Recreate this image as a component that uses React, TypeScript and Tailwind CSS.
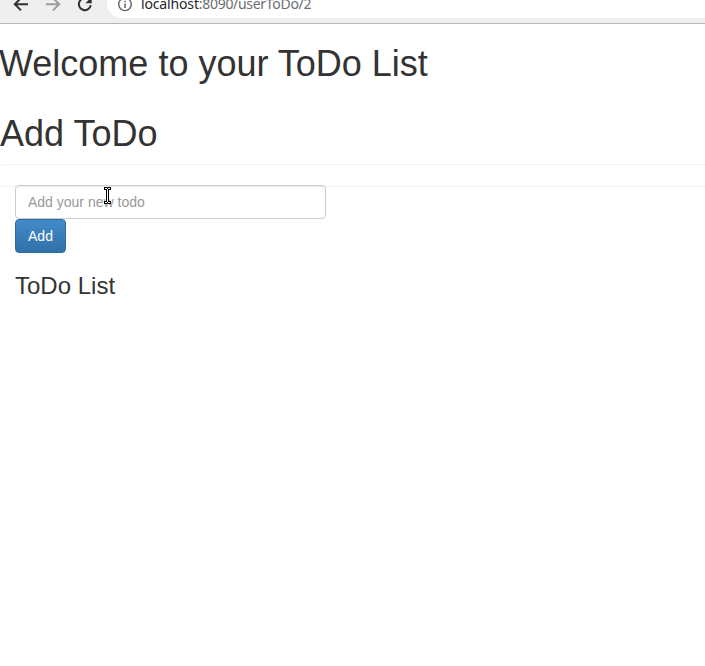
function BrowserBar() {
  return (
    <header className="h-6 shrink-0 overflow-hidden border-b border-[#b8b8b8] bg-[#efefef]">
      <div className="flex h-[18px] items-start">
        <svg className="h-[18px] w-[107px] shrink-0" viewBox="0 0 107 18" fill="none">
          <path d="M28 4.2H15M21 -2L14.8 4.2L21 10.4" stroke="#303134" strokeWidth="2" />
          <path d="M46 4.2H59M53 -2L59.2 4.2L53 10.4" stroke="#9b9c9e" strokeWidth="2" />
          <path d="M90.8 5.2A6 6 0 1 1 89 -0.2" stroke="#303134" strokeWidth="2" />
          <path d="M91.7 -3V3.3H85.4Z" fill="#303134" />
        </svg>
        <div className="flex h-[18px] flex-1 items-start rounded-bl-[15px] bg-white pl-[10px]">
          <svg className="h-[18px] w-4 shrink-0" viewBox="0 0 16 18" fill="none">
            <circle cx="8" cy="4.3" r="6.3" stroke="#5f6368" strokeWidth="1.4" />
            <path d="M8 3.5V8M8 0.7V2.2" stroke="#5f6368" strokeWidth="1.5" />
          </svg>
          <span className="-mt-[6px] ml-[8px] whitespace-nowrap font-['Noto_Sans',sans-serif] text-[14px] leading-5 tracking-[-0.3px] text-[#6b6d70]">
            <span className="tracking-[-0.15px] text-[#25262a]">localhost</span>:8090/userToDo/2
          </span>
        </div>
      </div>
    </header>
  );
}

function TextCursor() {
  return (
    <svg className="pointer-events-none absolute left-[89px] top-[2px] h-[17px] w-[7px]" viewBox="0 0 7 17">
      <path d="M0 0H3L3.5 0.5L4 0H7V3H5V14H7V17H4L3.5 16.5L3 17H0V14H2V3H0Z" fill="#000" />
      <path d="M1 1H3V2H4V1H6V2H4V15H6V16H4V15H3V16H1V15H3V2H1Z" fill="#fff" />
    </svg>
  );
}

export default function App() {
  return (
    <div className="flex h-[666px] w-full flex-col overflow-hidden bg-white font-['Liberation_Sans',Arial,sans-serif] text-sm text-[#333]">
      <BrowserBar />
      <main>
        <h1 className="-ml-px mt-5 text-[36px] font-normal leading-[39.6px]">Welcome to your ToDo List</h1>
        <h1 className="mt-[30px] text-[36px] font-normal leading-[39.6px]">Add ToDo</h1>
        <div className="-ml-px mt-[10.8px] h-[23px] rounded-l-[4px] border border-r-0 border-[#f3f3f3]" />
        <form className="relative -mt-[2px] ml-[15px] w-[311px]" onSubmit={(e) => e.preventDefault()}>
          <input
            className="block h-[34px] w-full rounded-[4px] border border-[#ccc] bg-white px-3 py-1.5 text-sm leading-5 shadow-[inset_0_1px_1px_rgba(0,0,0,0.075)] placeholder:text-[#999]"
            placeholder="Add your new todo"
          />
          <button className="block h-[34px] w-[51px] rounded-[4px] border border-[#2d6ca2] bg-linear-to-b from-[#428bca] to-[#3071a9] text-sm leading-5 text-white">
            Add
          </button>
          <TextCursor />
        </form>
        <h3 className="ml-[15px] mt-5 text-2xl font-normal leading-[26.4px]">ToDo List</h3>
      </main>
    </div>
  );
}
